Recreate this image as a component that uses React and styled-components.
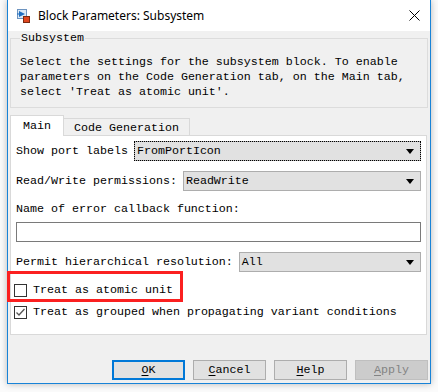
import React from "react";
import styled, { createGlobalStyle } from "styled-components";

const GlobalStyle = createGlobalStyle`
  html, body {
    margin: 0;
    padding: 0;
    background: #fbfbfb;
  }
  * {
    box-sizing: border-box;
  }
`;

const mono = `"Liberation Mono", "DejaVu Sans Mono", monospace`;

const Page = styled.div`
  position: relative;
  width: 438px;
  height: 392px;
  padding-left: 7px;
  overflow: hidden;
`;

const Window = styled.div`
  width: 424px;
  height: 384px;
  display: flex;
  flex-direction: column;
  background: #f0f0f0;
  border: 1px solid #1883d7;
  border-top: none;
  box-shadow: 0 0 7px rgba(0, 0, 0, 0.28);
  font-family: ${mono};
  font-size: 11.67px;
  color: #000;
`;

const TitleBar = styled.div`
  height: 31px;
  flex: none;
  display: flex;
  align-items: center;
  padding-left: 9px;
  padding-right: 10px;
  background: #fff;
`;

const TitleText = styled.span`
  margin-left: 8px;
  font-family: "Noto Sans", "Open Sans", sans-serif;
  font-size: 12px;
  flex: 1;
`;

const Body = styled.div`
  flex: 1;
  display: flex;
  flex-direction: column;
  padding: 0 2px 3px 2px;
`;

const GroupBox = styled.fieldset`
  margin: 0;
  height: 77px;
  padding: 0 12px 6px 9px;
  border: 1px solid #dcdcdc;
`;

const Legend = styled.legend`
  padding: 0 1px;
  line-height: 14px;
  height: 14px;
`;

const Description = styled.p`
  margin: 10px 0 0 0;
  line-height: 15px;
  max-width: 400px;
`;

const TabStrip = styled.div`
  display: flex;
  align-items: flex-end;
  height: 21px;
  margin-top: 7px;
  margin-bottom: -1px;
  position: relative;
  z-index: 1;
`;

const Tab = styled.div`
  display: flex;
  align-items: center;
  justify-content: center;
  width: ${(p) => p.$w}px;
  height: ${(p) => (p.$active ? 21 : 17)}px;
  margin-bottom: ${(p) => (p.$active ? 0 : 1)}px;
  margin-left: ${(p) => (p.$active ? 0 : -1)}px;
  background: ${(p) => (p.$active ? "#fff" : "#f0f0f0")};
  border: 1px solid #d9d9d9;
  border-bottom: none;
  position: relative;
  z-index: ${(p) => (p.$active ? 2 : 1)};
  padding-top: ${(p) => (p.$active ? 0 : 1)}px;
`;

const Panel = styled.div`
  height: 200px;
  margin-right: 1px;
  background: #fff;
  border: 1px solid #d9d9d9;
  padding: 0 5px;
  display: flex;
  flex-direction: column;
`;

const Row = styled.div`
  display: flex;
  align-items: center;
  gap: 6px;
  margin-top: ${(p) => p.$mt}px;
  height: 20px;
  white-space: nowrap;
`;

const Select = styled.div`
  flex: 1;
  height: 20px;
  display: flex;
  align-items: center;
  justify-content: space-between;
  padding: 0 6px 0 2px;
  background: #e1e1e1;
  border: 1px solid #adadad;
  outline: ${(p) => (p.$focused ? "1px dotted #000" : "none")};
  outline-offset: -1px;
`;

const Arrow = styled.span`
  width: 0;
  height: 0;
  border-left: 4px solid transparent;
  border-right: 4px solid transparent;
  border-top: 5px solid #000;
`;

const Label = styled.div`
  margin-top: ${(p) => p.$mt}px;
  line-height: 15px;
`;

const TextInput = styled.div`
  margin-top: 5px;
  height: 20px;
  background: #fff;
  border: 1px solid #7a7a7a;
`;

const CheckRow = styled.div`
  display: flex;
  align-items: center;
  gap: 6px;
  height: 18px;
  margin-top: ${(p) => p.$mt}px;
  margin-left: -2px;
`;

const Box = styled.span`
  width: 13px;
  height: 13px;
  flex: none;
  border: 1px solid #333;
  background: #fff;
  display: flex;
`;

const Footer = styled.div`
  display: flex;
  justify-content: flex-end;
  gap: 8px;
  margin-top: 25px;
`;

const Button = styled.div`
  width: 73px;
  height: 20px;
  display: flex;
  align-items: center;
  justify-content: center;
  background: ${(p) => (p.$disabled ? "#cccccc" : "#e1e1e1")};
  border: ${(p) =>
    p.$primary ? "2px solid #0078d7" : p.$disabled ? "1px solid #bfbfbf" : "1px solid #adadad"};
  color: ${(p) => (p.$disabled ? "#838383" : "#000")};
  u {
    text-decoration-thickness: 1px;
    text-underline-offset: 2px;
  }
`;

const Highlight = styled.div`
  position: absolute;
  left: 7px;
  top: 271px;
  width: 176px;
  height: 31px;
  border: 3px solid #fb2020;
  pointer-events: none;
`;

function BlockIcon() {
  return (
    <svg width="13" height="15" viewBox="0 0 13 15">
      <rect x="0.5" y="1.5" width="9" height="9" fill="#dbe9f6" stroke="#6d94c0" />
      <path d="M2 3 L8 6 L2 9 Z" fill="#1f6fc0" />
      <path d="M0 6 H2" stroke="#1f6fc0" />
      <rect x="6.5" y="8.5" width="6" height="6" fill="#e0461e" stroke="#7a2a12" />
    </svg>
  );
}

function CloseIcon() {
  return (
    <svg width="11" height="11" viewBox="0 0 11 11">
      <path d="M0.5 0.5 L10.5 10.5 M10.5 0.5 L0.5 10.5" stroke="#000" strokeWidth="1" />
    </svg>
  );
}

function CheckBox({ checked }) {
  return (
    <Box>
      {checked && (
        <svg width="11" height="11" viewBox="0 0 11 11">
          <path d="M1.5 5.5 L4 8 L9.5 2" fill="none" stroke="#555" strokeWidth="1.3" />
        </svg>
      )}
    </Box>
  );
}

export default function App() {
  return (
    <Page>
      <GlobalStyle />
      <Window>
        <TitleBar>
          <BlockIcon />
          <TitleText>Block Parameters: Subsystem</TitleText>
          <CloseIcon />
        </TitleBar>
        <Body>
          <GroupBox>
            <Legend>Subsystem</Legend>
            <Description>
              Select the settings for the subsystem block. To enable parameters on the Code
              Generation tab, on the Main tab, select 'Treat as atomic unit'.
            </Description>
          </GroupBox>

          <TabStrip>
            <Tab $active $w={54}>Main</Tab>
            <Tab $w={127}>Code Generation</Tab>
          </TabStrip>

          <Panel>
            <Row $mt={5}>
              <span>Show port labels</span>
              <Select $focused>
                <span>FromPortIcon</span>
                <Arrow />
              </Select>
            </Row>
            <Row $mt={10}>
              <span>Read/Write permissions:</span>
              <Select>
                <span>ReadWrite</span>
                <Arrow />
              </Select>
            </Row>
            <Label $mt={11}>Name of error callback function:</Label>
            <TextInput />
            <Row $mt={10}>
              <span>Permit hierarchical resolution:</span>
              <Select>
                <span>All</span>
                <Arrow />
              </Select>
            </Row>
            <CheckRow $mt={9}>
              <CheckBox />
              <span>Treat as atomic unit</span>
            </CheckRow>
            <CheckRow $mt={4}>
              <CheckBox checked />
              <span>Treat as grouped when propagating variant conditions</span>
            </CheckRow>
          </Panel>

          <Footer>
            <Button $primary>
              <span><u>O</u>K</span>
            </Button>
            <Button>
              <span><u>C</u>ancel</span>
            </Button>
            <Button>
              <span><u>H</u>elp</span>
            </Button>
            <Button $disabled>
              <span><u>A</u>pply</span>
            </Button>
          </Footer>
        </Body>
      </Window>
      <Highlight />
    </Page>
  );
}
